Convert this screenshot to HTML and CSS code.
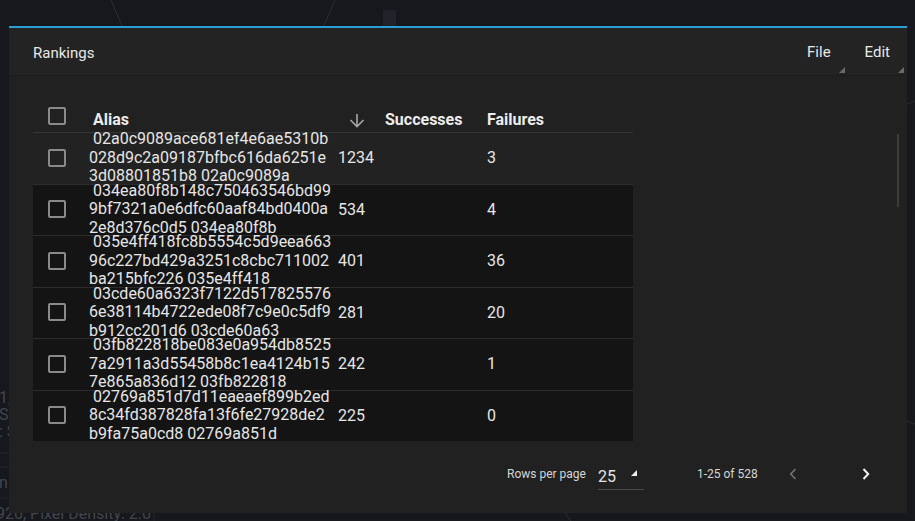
FILE: index.html
```html
<!DOCTYPE html>
<html lang="en">
<head>
<meta charset="utf-8">
<title>Rankings</title>
<link rel="stylesheet" href="styles.css">
</head>
<body>
<svg class="backdrop" width="915" height="521" viewBox="0 0 915 521" aria-hidden="true">
  <line x1="111" y1="0" x2="123" y2="28" stroke="#2a2d34" stroke-width="1"/>
  <line x1="335" y1="0" x2="323" y2="28" stroke="#2a2d34" stroke-width="1"/>
  <rect x="383" y="10" width="13" height="18" fill="#20232a"/>
  <line x1="907" y1="104" x2="915" y2="101" stroke="#2a2d34" stroke-width="1"/>
  <line x1="907" y1="421" x2="915" y2="424" stroke="#2a2d34" stroke-width="1"/>
  <line x1="0" y1="453" x2="9" y2="453" stroke="#22252b" stroke-width="1"/>
  <line x1="0" y1="467" x2="9" y2="467" stroke="#22252b" stroke-width="1"/>
  <line x1="0" y1="498" x2="9" y2="498" stroke="#22252b" stroke-width="1"/>
  <line x1="154" y1="513" x2="154" y2="521" stroke="#22252b" stroke-width="1"/>
  <line x1="565" y1="513" x2="571" y2="521" stroke="#2a2d34" stroke-width="1"/>
</svg>
<div class="bg-text bg-t1">1,</div>
<div class="bg-text bg-t2">S1</div>
<div class="bg-text bg-t3">: S</div>
<div class="bg-text bg-t4">n</div>
<div class="bg-text bg-t5">920, Pixel Density: 2.0</div>

<div class="panel">
  <div class="panel-head">
    <span class="title">Rankings</span>
    <div class="menus">
      <button class="menu">File<span class="corner"></span></button>
      <button class="menu">Edit<span class="corner"></span></button>
    </div>
  </div>
  <div class="panel-body">
    <div class="table">
      <div class="thead">
        <div class="cell cb-cell"><span class="checkbox"></span></div>
        <div class="cell th th-alias">Alias</div>
        <div class="cell th-sort">
          <svg width="16" height="15" viewBox="0 0 16 15"><path d="M8 1 V13.5 M1.5 7 L8 13.5 L14.5 7" fill="none" stroke="#a8a8a8" stroke-width="1.6"/></svg>
        </div>
        <div class="cell th">Successes</div>
        <div class="cell th">Failures</div>
      </div>
      <div class="tbody">
        <div class="row first">
          <div class="cell cb-cell"><span class="checkbox"></span></div>
          <div class="cell alias"><span class="ln ln1">02a0c9089ace681ef4e6ae5310b</span><span class="ln">028d9c2a09187bfbc616da6251e</span><span class="ln">3d08801851b8 02a0c9089a</span></div>
          <div class="cell num">1234</div>
          <div class="cell num">3</div>
        </div>
        <div class="row">
          <div class="cell cb-cell"><span class="checkbox"></span></div>
          <div class="cell alias"><span class="ln ln1">034ea80f8b148c750463546bd99</span><span class="ln">9bf7321a0e6dfc60aaf84bd0400a</span><span class="ln">2e8d376c0d5 034ea80f8b</span></div>
          <div class="cell num">534</div>
          <div class="cell num">4</div>
        </div>
        <div class="row">
          <div class="cell cb-cell"><span class="checkbox"></span></div>
          <div class="cell alias"><span class="ln ln1">035e4ff418fc8b5554c5d9eea663</span><span class="ln">96c227bd429a3251c8cbc711002</span><span class="ln">ba215bfc226 035e4ff418</span></div>
          <div class="cell num">401</div>
          <div class="cell num">36</div>
        </div>
        <div class="row">
          <div class="cell cb-cell"><span class="checkbox"></span></div>
          <div class="cell alias"><span class="ln ln1">03cde60a6323f7122d517825576</span><span class="ln">6e38114b4722ede08f7c9e0c5df9</span><span class="ln">b912cc201d6 03cde60a63</span></div>
          <div class="cell num">281</div>
          <div class="cell num">20</div>
        </div>
        <div class="row">
          <div class="cell cb-cell"><span class="checkbox"></span></div>
          <div class="cell alias"><span class="ln ln1">03fb822818be083e0a954db8525</span><span class="ln">7a2911a3d55458b8c1ea4124b15</span><span class="ln">7e865a836d12 03fb822818</span></div>
          <div class="cell num">242</div>
          <div class="cell num">1</div>
        </div>
        <div class="row">
          <div class="cell cb-cell"><span class="checkbox"></span></div>
          <div class="cell alias"><span class="ln ln1">02769a851d7d11eaeaef899b2ed</span><span class="ln">8c34fd387828fa13f6fe27928de2</span><span class="ln">b9fa75a0cd8 02769a851d</span></div>
          <div class="cell num">225</div>
          <div class="cell num">0</div>
        </div>
      </div>
    </div>
    <div class="pager">
      <span class="pager-label">Rows per page</span>
      <div class="select"><span class="select-value">25</span><span class="select-corner"></span></div>
      <span class="pager-range">1-25 of 528</span>
      <button class="page-btn prev" aria-label="Previous page">
        <svg width="8" height="12" viewBox="0 0 8 12"><path d="M6.5 1 L1.8 6 L6.5 11" fill="none" stroke="#6f6f6f" stroke-width="1.8"/></svg>
      </button>
      <button class="page-btn next" aria-label="Next page">
        <svg width="8" height="12" viewBox="0 0 8 12"><path d="M1.5 1 L6.2 6 L1.5 11" fill="none" stroke="#f2f2f2" stroke-width="2"/></svg>
      </button>
    </div>
    <div class="scrollbar"></div>
  </div>
</div>
</body>
</html>
```

FILE: styles.css
```css
* { box-sizing: border-box; }

html, body {
  margin: 0;
  padding: 0;
}

body {
  width: 915px;
  height: 521px;
  overflow: hidden;
  background: #16181d;
  font-family: Roboto, "Noto Sans", sans-serif;
  color: #e4e4e4;
  position: relative;
  padding: 26px 8px 0 9px;
}

.backdrop {
  position: absolute;
  left: 0;
  top: 0;
}

.bg-text {
  position: absolute;
  color: #42454d;
  font-size: 16px;
  line-height: 16px;
  white-space: nowrap;
}
.bg-t1 { left: -1px; top: 390px; }
.bg-t2 { left: -1px; top: 407px; }
.bg-t3 { left: -1px; top: 424px; }
.bg-t4 { left: -1px; top: 475px; }
.bg-t5 { left: -4px; top: 506px; }

.panel {
  position: relative;
  width: 898px;
  height: 487px;
  background: #212121;
  border-top: 2px solid #2a9fd4;
  display: flex;
  flex-direction: column;
}

.panel-head {
  height: 48px;
  flex: none;
  background: #232323;
  border-bottom: 1px solid #1b1b1b;
  display: flex;
  align-items: center;
  padding: 3px 3px 0 24px;
}

.title {
  font-size: 15px;
  color: #e8e8e8;
  flex: 1;
}

.menus {
  display: flex;
  align-self: stretch;
}

.menu {
  position: relative;
  background: none;
  border: 0;
  color: #e8e8e8;
  font-family: inherit;
  font-size: 15px;
  padding: 0 14px 0 20px;
  margin-top: -3px;
  height: 47px;
  cursor: pointer;
}

.corner {
  position: absolute;
  right: 0;
  bottom: 2px;
  width: 0;
  height: 0;
  border-left: 6px solid transparent;
  border-bottom: 6px solid #6a6a6a;
}

.panel-body {
  position: relative;
  flex: 1;
  padding: 24px 0 0 24px;
  display: flex;
  flex-direction: column;
}

.table {
  width: 600px;
}

.thead {
  height: 32px;
  display: grid;
  grid-template-columns: 56px 260px 36px 102px 1fr;
  align-items: center;
}

.cell {
  display: flex;
  align-items: center;
}

.cb-cell {
  padding-left: 15px;
}

.checkbox {
  width: 18px;
  height: 18px;
  border: 2px solid #8a8a8a;
  border-radius: 2px;
  display: block;
}

.th {
  font-size: 16px;
  font-weight: 700;
  color: #ececec;
  padding-top: 7px;
}
.th-alias { padding-left: 4px; }
.th-sort { padding-top: 8px; }

.tbody {
  height: 309px;
  overflow: hidden;
}

.row {
  height: 51.5px;
  display: grid;
  grid-template-columns: 56px 249px 149px 1fr;
  grid-template-rows: 100%;
  align-items: center;
  padding-bottom: 1px;
  border-top: 1px solid #2c2c2c;
  background: #141414;
}

.row.first {
  background: #222222;
  border-top-color: #353535;
}

.alias {
  flex-direction: column;
  align-items: flex-start;
  font-size: 16px;
  line-height: 18.5px;
  color: #e6e6e6;
  white-space: nowrap;
}

.ln { display: block; }
.ln1 { padding-left: 4px; }

.num {
  font-size: 16px;
  color: #e6e6e6;
}

.pager {
  height: 66px;
  display: flex;
  align-items: center;
  padding-left: 474px;
}

.pager-label {
  font-size: 12px;
  color: #d6d6d6;
}

.select {
  position: relative;
  margin-left: 12px;
  width: 46px;
  height: 30px;
  border-bottom: 1px solid #4a4a4a;
  margin-top: 1px;
  display: flex;
  align-items: center;
}

.select-value {
  font-size: 16px;
  color: #e4e4e4;
  padding-top: 5px;
}

.select-corner {
  position: absolute;
  left: 33px;
  top: 10px;
  width: 0;
  height: 0;
  border-left: 6px solid transparent;
  border-bottom: 6px solid #eeeeee;
}

.pager-range {
  margin-left: 53px;
  font-size: 12px;
  color: #d6d6d6;
}

.page-btn {
  background: none;
  border: 0;
  padding: 0;
  width: 24px;
  height: 24px;
  display: flex;
  align-items: center;
  justify-content: center;
  cursor: pointer;
}
.page-btn.prev { margin-left: 23px; }
.page-btn.next { margin-left: 49px; }

.scrollbar {
  position: absolute;
  right: 8px;
  top: 58px;
  width: 2px;
  height: 73px;
  background: #3c3c3c;
}
```
